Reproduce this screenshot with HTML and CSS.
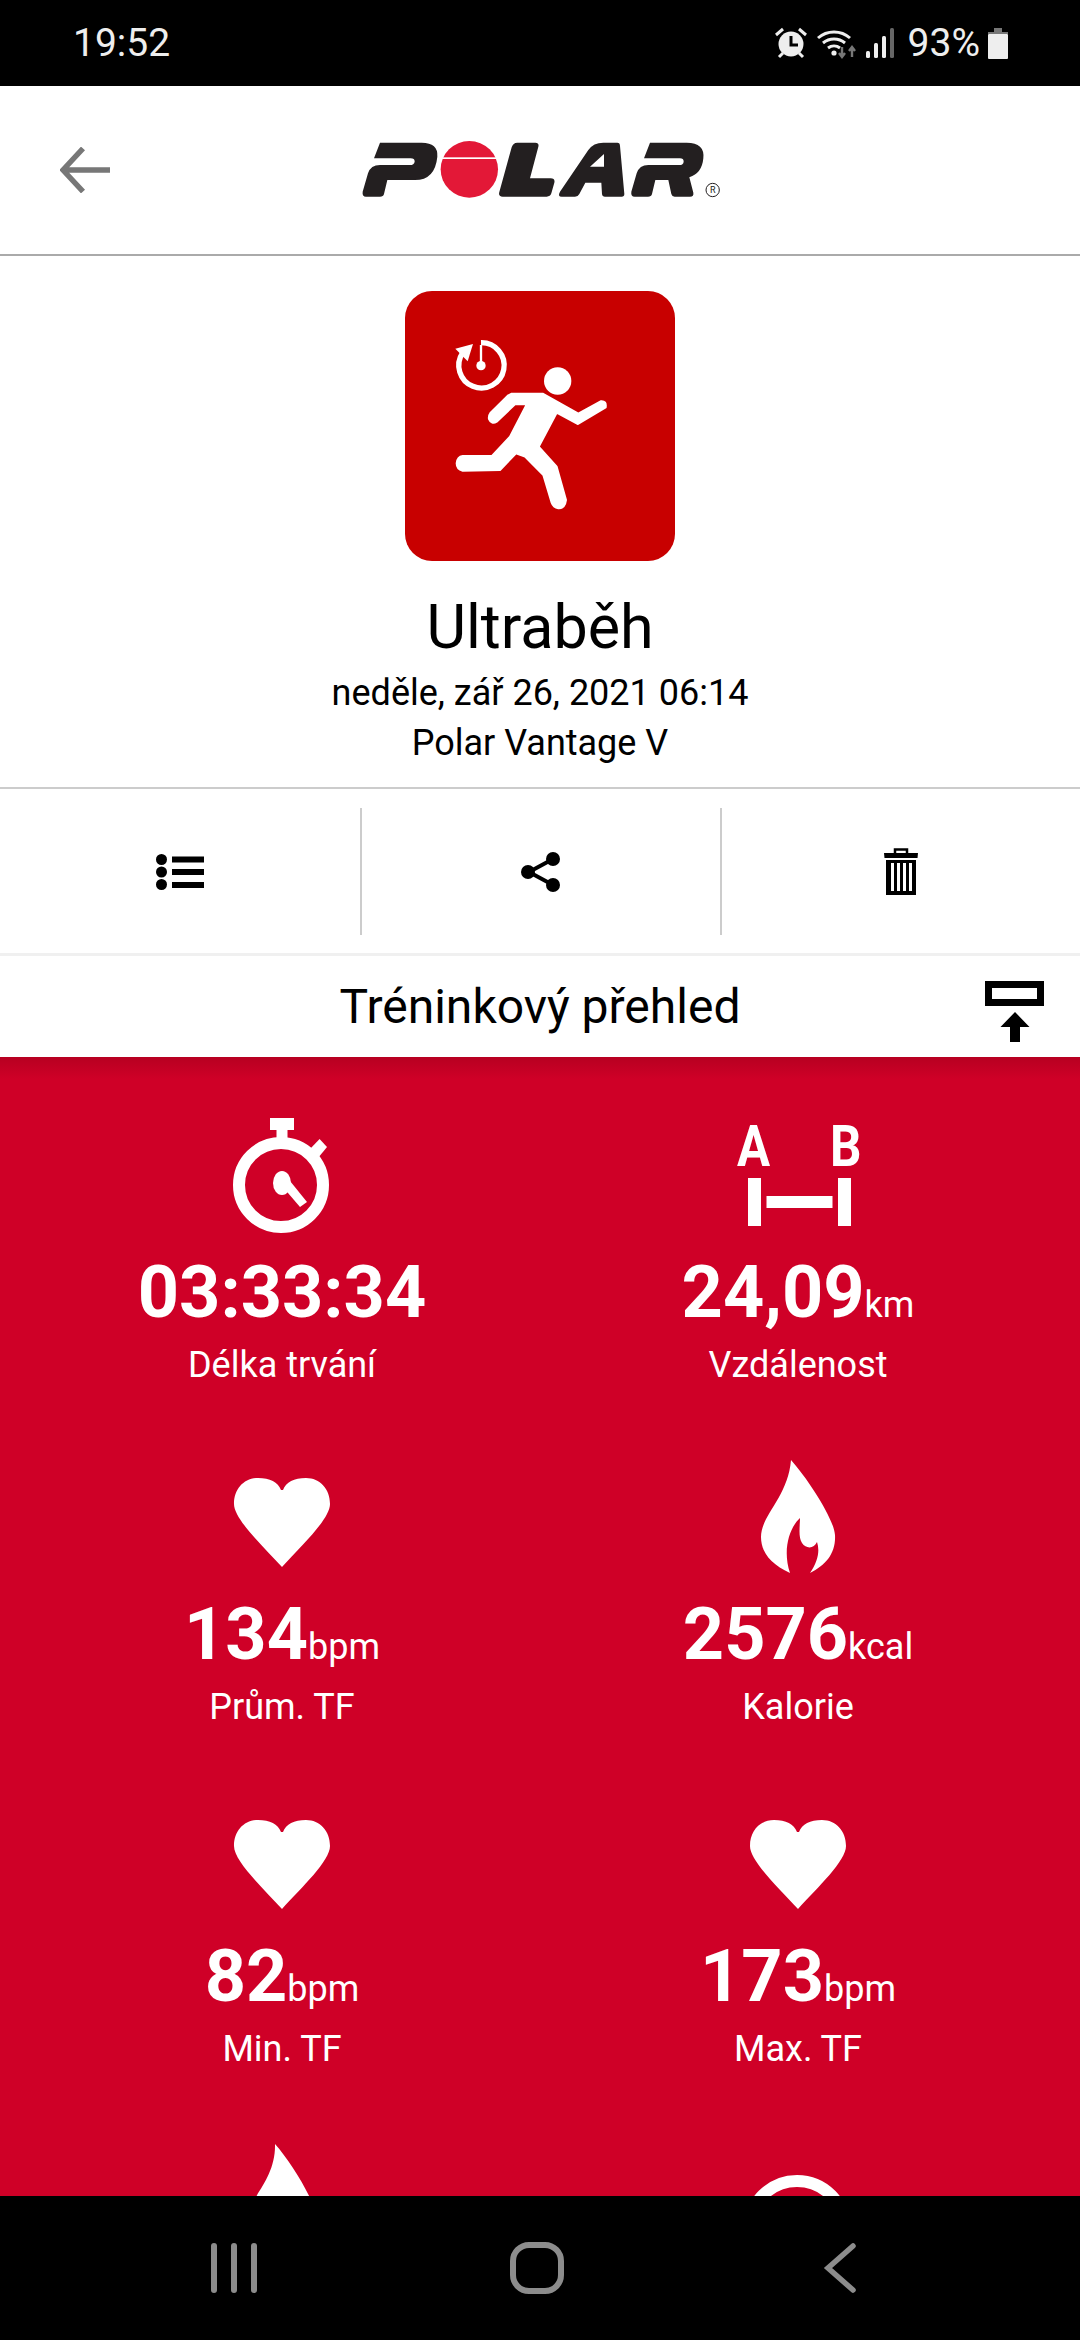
FILE: index.html
```html
<!DOCTYPE html>
<html lang="cs">
<head>
<meta charset="utf-8">
<title>Ultraběh</title>
<link rel="stylesheet" href="styles.css">
</head>
<body>
<div class="screen">
  <div class="status">
    <span class="clock">19:52</span>
    <div class="status-right">
      <svg class="ic-alarm" viewBox="0 0 34 32" width="34" height="32">
        <circle cx="17" cy="17" r="12.5" fill="#eee"/>
        <path d="M17 9v9h7" fill="none" stroke="#000" stroke-width="3"/>
        <path d="M2 8l7-6M32 8l-7-6M5 30l4-4M29 30l-4-4" stroke="#eee" stroke-width="3"/>
      </svg>
      <svg class="ic-wifi" viewBox="0 0 42 32" width="42" height="32">
        <path d="M2 11a24 24 0 0 1 32 0M7 16a17 17 0 0 1 22 0M12 21a10 10 0 0 1 12 0" fill="none" stroke="#eee" stroke-width="3"/>
        <circle cx="18" cy="26" r="2.6" fill="#eee"/>
        <path d="M26 20v9M23 26l3 4 3-4" fill="none" stroke="#777" stroke-width="2.4"/>
        <path d="M36 30v-9M33 24l3-4 3 4" fill="none" stroke="#777" stroke-width="2.4"/>
      </svg>
      <svg class="ic-signal" viewBox="0 0 28 32" width="28" height="32">
        <rect x="0" y="24" width="4" height="7" rx="1.5" fill="#eee"/>
        <rect x="8" y="16" width="4" height="15" rx="1.5" fill="#eee"/>
        <rect x="16" y="9" width="4" height="22" rx="1.5" fill="#eee"/>
        <rect x="24" y="1" width="4" height="30" rx="1.5" fill="#666"/>
      </svg>
      <span class="percent">93%</span>
      <svg class="ic-batt" viewBox="0 0 20 31" width="20" height="31">
        <path d="M6 0h8v4h6v2H0V4h6z" fill="#777"/>
        <rect y="6" width="20" height="25" rx="1" fill="#eee"/>
      </svg>
    </div>
  </div>

  <header class="topbar">
    <svg class="back" viewBox="0 0 50 46" width="50" height="46">
      <path d="M23 1.5L3 23l20 21.5M3 23h47" fill="none" stroke="#777" stroke-width="5.5"/>
    </svg>
    <svg class="logo" viewBox="0 0 1200 300" width="400" height="100">
      <path fill="#231f20" d="M120 68H245Q295 68 292 110Q285 180 225 180H142L132 222Q130 230 120 230H78Q66 230 68 215L84 160Q92 135 120 135H210Q222 135 224 125Q224 115 212 115H102Z"/>
      <ellipse cx="388" cy="148" rx="86" ry="85" fill="#e31837"/>
      <rect x="296" y="112" width="184" height="5" fill="#fff"/>
      <path fill="#231f20" d="M532 68H586Q598 68 595 80L570 175H632Q646 175 643 188L634 220Q631 230 620 230H488Q474 230 478 216L515 82Q519 68 532 68Z"/>
      <path fill="#231f20" fill-rule="evenodd" d="M790 68H832Q840 68 840 78L853 222Q853 230 845 230H795Q787 230 786 222L784 188H736L718 222Q714 230 705 230H665Q652 230 660 215L745 90Q760 68 790 68ZM792 102L750 140H792Z"/>
      <path fill="#231f20" d="M930 68H1040Q1095 68 1090 115Q1086 160 1048 172L1060 218Q1062 230 1050 230H1004Q996 230 994 222L985 180H946L936 222Q934 230 924 230H884Q872 230 874 215L890 160Q898 135 925 135H1018Q1030 135 1031 125Q1031 115 1020 115H912Z"/>
      <circle cx="1118" cy="210" r="20" fill="none" stroke="#231f20" stroke-width="3"/>
      <text class="reg" x="1118" y="220" text-anchor="middle">R</text>
    </svg>
    <span></span>
  </header>

  <section class="summary">
    <div class="tile">
      <svg viewBox="75 63 810 810" width="270" height="270">
        <circle cx="533" cy="333" r="41" fill="#fff"/>
        <path fill="#fff" stroke="#fff" stroke-width="6" stroke-linejoin="round" d="M395 371H488L595 431L662 394Q680 392 677 412L594 462L530 428L476 530L530 590L558 690Q555 716 535 715Q520 712 515 698L490 615L435 560L408 550L360 600L248 602Q230 598 230 580Q232 560 248 558H336L390 500L440 403H405L350 455Q335 465 327 447Q325 438 332 428L385 376Z"/>
        <path fill="none" stroke="#fff" stroke-width="16" d="M303 218A68 68 0 1 1 248 248"/>
        <path fill="#fff" d="M226 236L279 222L263 274Z"/>
        <path d="M303 225V287" stroke="#fff" stroke-width="7"/>
        <circle cx="303" cy="287" r="14" fill="#fff"/>
      </svg>
    </div>
    <h1 class="sport">Ultraběh</h1>
    <p class="meta">neděle, zář 26, 2021 06:14</p>
    <p class="meta">Polar Vantage V</p>
  </section>

  <nav class="actions">
    <div class="action">
      <svg viewBox="0 0 48 36" width="48" height="36">
        <circle cx="5.5" cy="5.5" r="5.5"/><circle cx="5.5" cy="18" r="5.5"/><circle cx="5.5" cy="30.5" r="5.5"/>
        <rect x="16" y="2.5" width="32" height="6"/><rect x="16" y="15" width="32" height="6"/><rect x="16" y="28" width="32" height="6"/>
      </svg>
    </div>
    <div class="action">
      <svg viewBox="0 0 42 42" width="42" height="42">
        <path d="M33 8L9 21l24 13" fill="none" stroke="#000" stroke-width="4"/>
        <circle cx="33" cy="8" r="7"/><circle cx="8" cy="21" r="7"/><circle cx="33" cy="34" r="7"/>
      </svg>
    </div>
    <div class="action">
      <svg viewBox="0 0 34 47" width="34" height="47">
        <path d="M11 5V1.5h12V5" fill="none" stroke="#000" stroke-width="2.5"/>
        <path d="M0 5h34l-.5 5H.5z"/>
        <path d="M2 12h30v35H2zM7 15v28h3V15zM13 15v28h3V15zM19 15v28h3V15zM25 15v28h3V15z" fill-rule="evenodd"/>
      </svg>
    </div>
  </nav>

  <div class="section-head">
    <h2 class="section-title">Tréninkový přehled</h2>
    <svg class="collapse" viewBox="0 0 60 61" width="60" height="61">
      <rect x="3.5" y="3.5" width="52" height="18" fill="none" stroke="#000" stroke-width="7"/>
      <path d="M30 31L44.500 46H35V61H25V46H15.500Z"/>
    </svg>
  </div>

  <main class="stats">
    <div class="stat">
      <svg class="stat-icon" viewBox="0 0 120 120">
        <path fill="#fff" d="M48 3H72V15H65.500V24H54.500V15H48Z"/>
        <path fill="#fff" d="M88 34L97.600 24L105 32L96 43Z"/>
        <circle cx="59" cy="70" r="42" fill="none" stroke="#fff" stroke-width="12"/>
        <ellipse cx="60" cy="68" rx="9" ry="12" fill="#fff"/>
        <path fill="#fff" d="M60 71L68 66L85 87L78 92Z"/>
      </svg>
      <div class="reading"><span class="num">03:33:34</span></div>
      <div class="label">Délka trvání</div>
    </div>
    <div class="stat">
      <svg class="stat-icon wide" viewBox="0 -12 140 132">
        <text class="ab" transform="translate(9 51) scale(.85 1)">A</text>
        <text class="ab" transform="translate(102 51) scale(.85 1)">B</text>
        <rect x="20" y="63" width="13" height="48" fill="#fff"/>
        <rect x="38.500" y="81" width="66" height="12" fill="#fff"/>
        <rect x="110" y="63" width="13" height="48" fill="#fff"/>
      </svg>
      <div class="reading"><span class="num">24,09</span><span class="unit">km</span></div>
      <div class="label">Vzdálenost</div>
    </div>
    <div class="stat">
      <svg class="stat-icon" viewBox="0 0 120 120">
        <path class="heart" d="M60 110C40 88 12 62 12 47C12 32 22 21 36 21C48 21 56 25 59 33H61C64 25 72 21 84 21C98 21 108 32 108 47C108 62 80 88 60 110Z"/>
      </svg>
      <div class="reading"><span class="num">134</span><span class="unit">bpm</span></div>
      <div class="label">Prům. TF</div>
    </div>
    <div class="stat">
      <svg class="stat-icon" viewBox="0 0 120 120">
        <path class="heart" d="M53 3C70 22 96 62 97 78C98 96 88 108 72 116C80 104 82 94 79 85C76 92 68 92 64 86C60 80 62 68 62 61C52 70 44 92 52 116C34 108 23 96 23 80C23 58 50 40 53 3Z"/>
      </svg>
      <div class="reading"><span class="num">2576</span><span class="unit">kcal</span></div>
      <div class="label">Kalorie</div>
    </div>
    <div class="stat">
      <svg class="stat-icon" viewBox="0 0 120 120">
        <path class="heart" d="M60 110C40 88 12 62 12 47C12 32 22 21 36 21C48 21 56 25 59 33H61C64 25 72 21 84 21C98 21 108 32 108 47C108 62 80 88 60 110Z"/>
      </svg>
      <div class="reading"><span class="num">82</span><span class="unit">bpm</span></div>
      <div class="label">Min. TF</div>
    </div>
    <div class="stat">
      <svg class="stat-icon" viewBox="0 0 120 120">
        <path class="heart" d="M60 110C40 88 12 62 12 47C12 32 22 21 36 21C48 21 56 25 59 33H61C64 25 72 21 84 21C98 21 108 32 108 47C108 62 80 88 60 110Z"/>
      </svg>
      <div class="reading"><span class="num">173</span><span class="unit">bpm</span></div>
      <div class="label">Max. TF</div>
    </div>
    <div class="stat">
      <svg class="stat-icon" viewBox="0 0 120 120">
        <path class="heart" d="M53 3C70 22 94 62 95 78C96 100 80 116 60 116C40 116 25 100 25 80C25 58 54 40 53 3Z"/>
      </svg>
    </div>
    <div class="stat">
      <svg class="stat-icon" viewBox="0 0 120 120">
        <circle cx="59" cy="88" r="48" fill="none" stroke="#fff" stroke-width="12"/>
      </svg>
    </div>
  </main>

  <footer class="navbar">
    <svg class="nav-recent" viewBox="0 0 46 50" width="46" height="50">
      <rect x="0" width="6" height="50" rx="3"/><rect x="20" width="6" height="50" rx="3"/><rect x="40" width="6" height="50" rx="3"/>
    </svg>
    <svg class="nav-home" viewBox="0 0 54 52" width="54" height="52">
      <rect x="3" y="3" width="48" height="46" rx="16" fill="none" stroke="#8c8c8c" stroke-width="6"/>
    </svg>
    <svg class="nav-back" viewBox="0 0 34 50" width="34" height="50">
      <path d="M30 3L5 25l25 22" fill="none" stroke="#8c8c8c" stroke-width="5.500" stroke-linecap="round"/>
    </svg>
  </footer>
</div>
</body>
</html>
```

FILE: styles.css
```css
* { box-sizing: border-box; }

html, body {
  margin: 0;
  padding: 0;
  background: #fff;
}

.screen {
  width: 1080px;
  height: 2340px;
  display: flex;
  flex-direction: column;
  overflow: hidden;
  font-family: Roboto, "Noto Sans", sans-serif;
  color: #000;
}

/* system status bar */
.status {
  height: 86px;
  flex: none;
  background: #000;
  color: #eee;
  display: flex;
  align-items: center;
  justify-content: space-between;
  padding: 0 72px 0 73px;
}

.clock {
  font-size: 39px;
  line-height: 86px;
}

.status-right {
  display: flex;
  align-items: center;
  gap: 8px;
}

.percent {
  font-size: 39px;
  line-height: 86px;
  margin-left: 6px;
}

/* app bar */
.topbar {
  height: 170px;
  flex: none;
  display: grid;
  grid-template-columns: 1fr auto 1fr;
  align-items: center;
  border-bottom: 2px solid #aaa;
}

.back {
  margin-left: 60px;
}

.reg {
  font-family: Roboto, sans-serif;
  font-size: 27px;
  fill: #231f20;
}

/* session summary */
.summary {
  height: 533px;
  flex: none;
  padding-top: 35px;
  display: flex;
  flex-direction: column;
  align-items: center;
  border-bottom: 2px solid #ccc;
}

.tile {
  width: 270px;
  height: 270px;
  background: #c80000;
  border-radius: 27px;
  flex: none;
}

.tile svg {
  display: block;
}

.sport {
  margin: 32px 0 7px;
  font-size: 61px;
  line-height: 68px;
  font-weight: 400;
}

.meta {
  margin: 0;
  font-size: 36px;
  line-height: 50px;
}

/* action row */
.actions {
  height: 167px;
  flex: none;
  display: grid;
  grid-template-columns: repeat(3, 1fr);
  padding: 19px 0 18px;
  border-bottom: 3px solid #f0f0f0;
}

.action {
  display: flex;
  align-items: center;
  justify-content: center;
}

.action + .action {
  border-left: 2px solid #ccc;
}

/* section heading */
.section-head {
  height: 101px;
  flex: none;
  display: flex;
  align-items: center;
  justify-content: center;
  position: relative;
  background: #fff;
}

.section-title {
  margin: 0;
  font-size: 48px;
  font-weight: 400;
  line-height: 60px;
}

.collapse {
  position: absolute;
  left: 985px;
  top: 25px;
}

/* statistics grid */
.stats {
  flex: 1;
  min-height: 0;
  overflow: hidden;
  background: linear-gradient(#b70021, #cf0027 22px);
  color: #fff;
  display: grid;
  grid-template-columns: 516px 516px;
  grid-auto-rows: 342px;
  justify-content: center;
  padding-top: 58px;
}

.stat {
  display: flex;
  flex-direction: column;
  align-items: center;
}

.stat-icon {
  display: block;
  width: 120px;
  height: 120px;
  flex: none;
}

.stat-icon.wide {
  width: 140px;
  height: 132px;
  margin-top: -12px;
}

.heart {
  fill: #fff;
}

.ab {
  font-family: Roboto, sans-serif;
  font-weight: 700;
  font-size: 58px;
  fill: #fff;
}

.reading {
  height: 84px;
  margin-top: 16px;
  display: flex;
  align-items: baseline;
  justify-content: center;
}

.num {
  font-size: 72px;
  line-height: 84px;
  font-weight: 700;
}

.unit {
  font-size: 36px;
  line-height: 84px;
}

.label {
  font-size: 36px;
  line-height: 44px;
  margin-top: 8px;
}

/* system navigation bar */
.navbar {
  height: 144px;
  flex: none;
  background: #000;
  display: flex;
  align-items: center;
  padding-left: 211px;
}

.nav-recent {
  fill: #8c8c8c;
}

.nav-home {
  margin-left: 253px;
}

.nav-back {
  margin-left: 259px;
}
```
